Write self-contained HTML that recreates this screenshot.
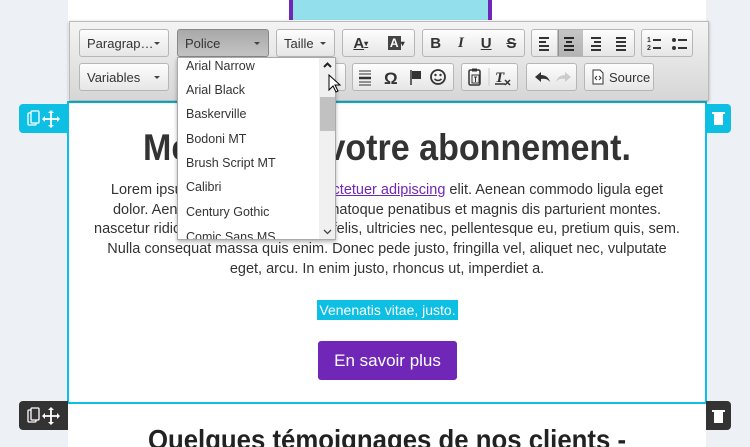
<!DOCTYPE html>
<html><head><meta charset="utf-8">
<style>
*{box-sizing:border-box;margin:0;padding:0}
html,body{width:750px;height:447px;overflow:hidden}
body{background:#edf0f4;font-family:"Liberation Sans",sans-serif;position:relative}
.abs{position:absolute}
.col{left:68px;width:638px;background:#fff}
.tb{left:69px;top:21px;width:640px;height:80px;background:linear-gradient(#f4f4f4,#d6d6d6);border:1px solid #bbb;box-shadow:0 1px 3px rgba(0,0,0,.3)}
.btn{position:absolute;height:28px;border:1px solid #b6b6b6;border-radius:3px;background:linear-gradient(#fdfdfd,#e6e6e6);font-size:13px;color:#333;display:flex;align-items:center}
.btn .car{position:absolute;right:8px;top:12px;border:3px solid transparent;border-top:3px solid #444;border-bottom:0}
.grp{position:absolute;height:28px;border:1px solid #b6b6b6;border-radius:3px;background:linear-gradient(#fdfdfd,#e6e6e6);display:flex}
.grp span{width:26px;height:26px;display:flex;align-items:center;justify-content:center;font-size:15px;font-weight:bold;color:#333}
.dd{left:177px;top:57px;width:159px;height:183px;background:#fff;border:1px solid #aaa;box-shadow:0 2px 4px rgba(0,0,0,.3);overflow:hidden}
.dd div{position:absolute;left:8px;font-size:12.5px;color:#333}
.body{color:#333;font-size:14.5px;text-align:center;line-height:19.7px;white-space:nowrap}
</style></head><body>
<div class="abs col" style="top:0;height:447px"></div>
<div class="abs" style="left:289px;top:0;width:203px;height:20px;background:#93e0ec;border-left:4px solid #7027b8;border-right:4px solid #7027b8"></div>

<div class="abs" style="left:67px;top:101px;width:640px;height:303px;border:2px solid #0dc0e3"></div>
<div class="abs" style="left:19px;top:104px;width:49px;height:29px;background:#0dc0e3;border-radius:4px 0 0 4px">
<svg width="49" height="29"><g fill="none" stroke="#fff" stroke-width="1.3"><rect x="9" y="9" width="8" height="12" rx="1"/><rect x="12" y="7" width="8" height="12" rx="1" fill="#0dc0e3"/></g><g stroke="#fff" stroke-width="1.8"><path d="M32 8v14M25 15h14"/></g><g fill="#fff"><path d="M32 6l-3 3h6zM32 24l-3-3h6zM23 15l3-3v6zM41 15l-3-3v6z"/></g></svg></div>
<div class="abs" style="left:706px;top:104px;width:25px;height:29px;background:#0dc0e3;border-radius:0 4px 4px 0"><div class="abs" style="left:8px;top:10px;width:9px;height:11px;background:#fff"></div><div class="abs" style="left:6px;top:8px;width:13px;height:2px;background:#fff"></div></div>
<div class="abs" style="left:19px;top:401px;width:49px;height:29px;background:#333;border-radius:4px 0 0 4px">
<svg width="49" height="29"><g fill="none" stroke="#fff" stroke-width="1.3"><rect x="9" y="9" width="8" height="12" rx="1"/><rect x="12" y="7" width="8" height="12" rx="1" fill="#333"/></g><g stroke="#fff" stroke-width="1.8"><path d="M32 8v14M25 15h14"/></g><g fill="#fff"><path d="M32 6l-3 3h6zM32 24l-3-3h6zM23 15l3-3v6zM41 15l-3-3v6z"/></g></svg></div>
<div class="abs" style="left:706px;top:401px;width:25px;height:29px;background:#333;border-radius:0 4px 4px 0"><div class="abs" style="left:8px;top:11px;width:9px;height:11px;background:#fff"></div><div class="abs" style="left:6px;top:9px;width:13px;height:2px;background:#fff"></div></div>

<div class="abs" style="left:68px;top:127px;width:638px;text-align:center;font-weight:bold;font-size:37px;color:#333;transform:scaleX(0.92);white-space:nowrap">Merci pour votre abonnement.</div>
<div class="abs body" style="left:68px;top:181px;width:638px">Lorem ipsum dolor sit amet, <span style="color:#7027b8;text-decoration:underline">consectetuer adipiscing</span> elit. Aenean commodo ligula eget<br>dolor. Aenean massa. Cum sociis natoque penatibus et magnis dis parturient montes.<br>nascetur ridiculus mus. Donec quam felis, ultricies nec, pellentesque eu, pretium quis, sem.<br>Nulla consequat massa quis enim. Donec pede justo, fringilla vel, aliquet nec, vulputate<br>eget, arcu. In enim justo, rhoncus ut, imperdiet a.</div>
<div class="abs body" style="left:317px;top:300px;width:141px;height:20px;background:#0dc0e3;color:#fff;line-height:20px;font-size:14px">Venenatis vitae, justo.</div>
<div class="abs" style="left:318px;top:341px;width:139px;height:39px;background:#7027b8;border-radius:3px;color:#fff;font-size:17px;text-align:center;line-height:39px">En savoir plus</div>
<div class="abs" style="left:68px;top:424px;width:638px;text-align:center;font-weight:bold;font-size:28px;color:#222;transform:scaleX(0.92);white-space:nowrap">Quelques témoignages de nos clients -</div>

<div class="abs tb"></div>
<div class="btn" style="left:79px;top:29px;width:90px;padding-left:7px">Paragrap…<i class="car"></i></div>
<div class="btn" style="left:177px;top:29px;width:92px;padding-left:7px;background:linear-gradient(#a8a8a8,#c4c4c4);border-color:#888">Police<i class="car"></i></div>
<div class="btn" style="left:276px;top:29px;width:59px;padding-left:7px">Taille<i class="car"></i></div>
<div class="grp" style="left:342px;top:29px;width:73px"><span style="width:36px;text-decoration:underline">A<small style="font-size:8px">▾</small></span><span style="width:36px"><b style="background:#444;color:#fff;padding:0 2px;font-size:12px">A</b><small style="font-size:8px">▾</small></span></div>
<div class="grp" style="left:422px;top:29px;width:103px"><span>B</span><span style="font-style:italic;font-family:'Liberation Serif'">I</span><span style="text-decoration:underline">U</span><span style="text-decoration:line-through">S</span></div>
<div class="grp" style="left:531px;top:29px;width:104px">
<svg width="104" height="26"><g stroke="#333" stroke-width="2"><path d="M7 8h10M7 12h7M7 16h10M7 20h10"/><path d="M32 8h10M34 12h6M32 16h10M32 20h10"/><path d="M59 8h10M62 12h7M59 16h10M59 20h10"/><path d="M84 8h10M84 12h10M84 16h10M84 20h10"/></g><rect x="26" y="0" width="1" height="26" fill="#bbb"/></svg>
</div>
<div class="abs" style="left:557px;top:30px;width:26px;height:26px;background:rgba(0,0,0,.22)"></div>
<div class="grp" style="left:641px;top:29px;width:52px">
<svg width="52" height="26"><g fill="#333" font-size="7" font-weight="bold"><text x="5" y="12">1</text><text x="5" y="20">2</text></g><g stroke="#333" stroke-width="2"><path d="M11 10h8M11 18h8M36 10h9M36 18h9"/></g><circle cx="32" cy="10" r="2" fill="#333"/><circle cx="32" cy="18" r="2" fill="#333"/></svg>
</div>
<div class="btn" style="left:79px;top:63px;width:90px;padding-left:7px">Variables<i class="car"></i></div>
<div class="grp" style="left:330px;top:63px;width:16px"></div>
<div class="grp" style="left:352px;top:63px;width:102px">
<svg width="102" height="26"><g stroke="#333"><path d="M6 7h12M6 10h12" stroke-width="1"/><path d="M6 14h12" stroke-width="2.5"/><path d="M6 18h12M6 21h12" stroke-width="1"/></g><text x="31" y="20" font-size="17" font-weight="bold" fill="#333" font-family="Liberation Sans">Ω</text><path d="M58 6v15" stroke="#333" stroke-width="1.5"/><path d="M59 7h9v8h-9z" fill="#333"/><circle cx="85" cy="13" r="7" fill="none" stroke="#333" stroke-width="1.8"/><circle cx="82.5" cy="11" r="1.2" fill="#333"/><circle cx="87.5" cy="11" r="1.2" fill="#333"/><path d="M81.5 15q3.5 3 7 0" fill="none" stroke="#333" stroke-width="1.5"/></svg>
</div>
<div class="grp" style="left:461px;top:63px;width:57px">
<svg width="57" height="26"><rect x="7" y="6" width="11" height="15" rx="1.5" fill="none" stroke="#333" stroke-width="1.5"/><rect x="10" y="4.5" width="5" height="3" fill="#333"/><rect x="10" y="11" width="7" height="8" fill="none" stroke="#333"/><path d="M12 13h3M13.5 13v5" stroke="#333"/><path d="M27 4v18" stroke="#ccc"/><text x="33" y="18" font-size="15" font-weight="bold" font-style="italic" fill="#333" font-family="Liberation Serif">T</text><path d="M33 20h10" stroke="#333" stroke-width="1.5"/><path d="M43 16l5 5M48 16l-5 5" stroke="#333" stroke-width="1.5"/></svg>
</div>
<div class="grp" style="left:526px;top:63px;width:51px">
<svg width="51" height="26"><path d="M8 13l6-5v3q7 0 9 7q-3-4-9-3v3z" fill="#333"/><path d="M44 13l-6-5v3q-7 0-9 7q3-4 9-3v3z" fill="#ccc"/></svg>
</div>
<div class="btn" style="left:584px;top:63px;width:70px;padding-left:6px"><svg width="14" height="16" style="margin-right:4px"><path d="M2 1h7l3 3v11H2z" fill="#fff" stroke="#333"/><path d="M6 7l-2 2 2 2M8 7l2 2-2 2" fill="none" stroke="#333"/></svg>Source</div>

<div class="abs dd">
<div style="top:1px">Arial Narrow</div>
<div style="top:25px">Arial Black</div>
<div style="top:49px">Baskerville</div>
<div style="top:74px">Bodoni MT</div>
<div style="top:98px">Brush Script MT</div>
<div style="top:122px">Calibri</div>
<div style="top:147px">Century Gothic</div>
<div style="top:172px">Comic Sans MS</div>
<span class="abs" style="left:141px;top:0;width:17px;height:183px;background:#f0f0f0"></span>
<span class="abs" style="left:142px;top:39px;width:15px;height:34px;background:#c1c1c1"></span>
<svg class="abs" style="left:141px;top:0" width="17" height="183"><path d="M5 9l3.5-3.5L12 9" fill="none" stroke="#222" stroke-width="2"/><path d="M5 172l3.5 3.5L12 172" fill="none" stroke="#444" stroke-width="1.3"/></svg>
</div>
<svg class="abs" style="left:328px;top:74px" width="14" height="20"><path d="M1 1v15l4-4 3 6 2-1-3-6h5z" fill="#fff" stroke="#000"/></svg>
</body></html>
